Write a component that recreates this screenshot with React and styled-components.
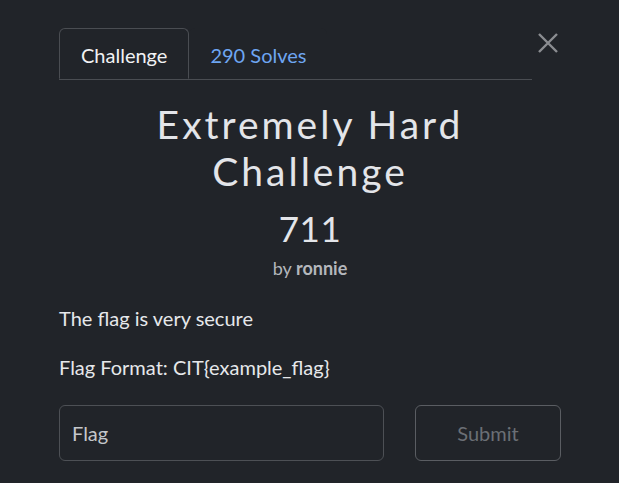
import React from "react";
import styled, { createGlobalStyle } from "styled-components";

const GlobalStyle = createGlobalStyle`
  html, body {
    margin: 0;
    padding: 0;
    background: #212429;
  }
  body {
    font-family: Lato, "Open Sans", sans-serif;
    color: #e6e8eb;
  }
`;

const Page = styled.div`
  width: 502px;
  padding: 28px 0 0 59px;
`;

const Header = styled.div`
  display: flex;
  align-items: flex-start;
  gap: 5px;
`;

const Tabs = styled.div`
  display: flex;
  width: 473px;
  border-bottom: 1px solid #4a4d52;
`;

const Tab = styled.div`
  height: 51px;
  box-sizing: border-box;
  padding: 2px 21px 0;
  display: flex;
  align-items: center;
  font-size: 20px;
  margin-bottom: ${(props) => (props.active ? "-1px" : "0")};
  color: ${(props) => (props.active ? "#f1f2f4" : "#6ea6f2")};
  background: #212429;
  border: ${(props) => (props.active ? "1px solid #4a4d52" : "0")};
  border-bottom-color: #212429;
  border-radius: 6px 6px 0 0;
`;

const Close = styled.button`
  width: 22px;
  height: 22px;
  margin-top: 4px;
  padding: 0;
  border: 0;
  background: none;
  display: flex;
  align-items: center;
  justify-content: center;
`;

const Title = styled.h2`
  margin: 21px 0 0;
  font-size: 39px;
  font-weight: 400;
  line-height: 47px;
  letter-spacing: 3px;
  text-align: center;
  color: #e3e5e9;
`;

const Value = styled.h3`
  margin: 12px 0 0;
  font-size: 35px;
  font-weight: 400;
  line-height: 42px;
  letter-spacing: 0.5px;
  text-align: center;
  color: #e3e5e9;
`;

const Author = styled.div`
  margin-top: 6px;
  font-size: 18px;
  line-height: 27px;
  text-align: center;
  color: #b4b7bc;
  b {
    font-weight: 700;
  }
`;

const Description = styled.p`
  margin: ${(props) => props.top}px 0 0;
  font-size: 20px;
  line-height: 30px;
  color: #e6e8eb;
`;

const Form = styled.form`
  display: grid;
  grid-template-columns: 325px 146px;
  justify-content: space-between;
  margin-top: 23px;
`;

const FlagInput = styled.input`
  height: 56px;
  box-sizing: border-box;
  padding: 0 12px;
  font-family: Lato, sans-serif;
  font-size: 20px;
  background: #212429;
  border: 1px solid #4d5055;
  border-radius: 6px;
  color: #e6e8eb;
  &::placeholder {
    color: #c4c6ca;
  }
`;

const SubmitButton = styled.button`
  height: 56px;
  font-family: Lato, sans-serif;
  font-size: 20px;
  background: transparent;
  border: 1px solid #5a5d62;
  border-radius: 6px;
  color: #6b6f75;
`;

export default function App() {
  return (
    <>
      <GlobalStyle />
      <Page>
        <Header>
          <Tabs>
            <Tab active>Challenge</Tab>
            <Tab>290 Solves</Tab>
          </Tabs>
          <Close aria-label="Close">
            <svg width="22" height="22" viewBox="0 0 22 22">
              <path d="M2 2 L20 20 M20 2 L2 20" stroke="#8b8d91" strokeWidth="2.4" />
            </svg>
          </Close>
        </Header>
        <Title>
          Extremely Hard
          <br />
          Challenge
        </Title>
        <Value>711</Value>
        <Author>
          by <b>ronnie</b>
        </Author>
        <Description top={21}>The flag is very secure</Description>
        <Description top={19}>Flag Format: CIT&#123;example_flag&#125;</Description>
        <Form onSubmit={(e) => e.preventDefault()}>
          <FlagInput placeholder="Flag" />
          <SubmitButton type="submit">Submit</SubmitButton>
        </Form>
      </Page>
    </>
  );
}
